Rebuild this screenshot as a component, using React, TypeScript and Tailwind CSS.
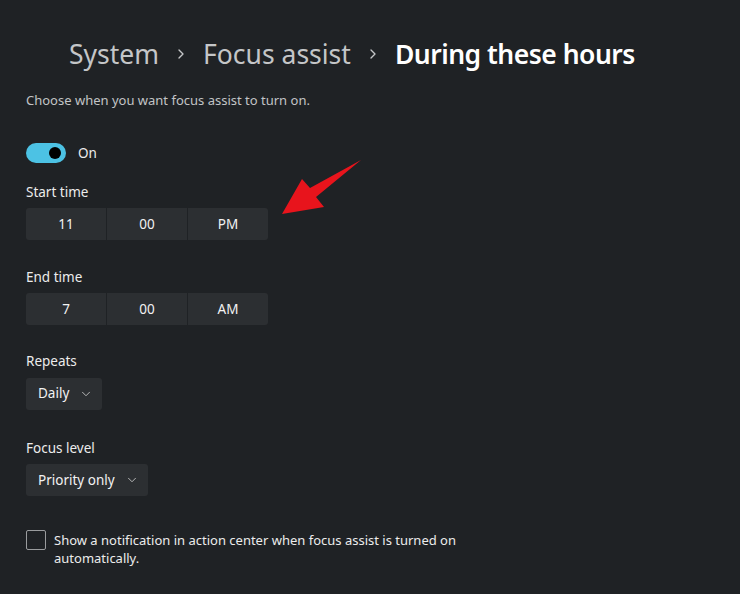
import { ChevronDown, ChevronRight } from "lucide-react";

function TimePicker({ parts }: { parts: string[] }) {
    return (
        <div className="flex w-[242px] h-8 gap-[1px] rounded-[3px] overflow-hidden">
            {parts.map((p, i) => (
                <div
                    key={i}
                    className="flex-1 flex items-center justify-center bg-[#2c2f32] text-[13.5px] text-[#f2f2f2]"
                >
                    {p}
                </div>
            ))}
        </div>
    );
}

function Dropdown({ value }: { value: string }) {
    return (
        <div className="inline-flex items-center gap-[10px] h-8 pl-3 pr-[9px] bg-[#2c2f32] rounded-[3px] text-[13.5px] text-[#f2f2f2]">
            {value}
            <ChevronDown size={14} strokeWidth={1.5} className="text-[#c8c8c8]" />
        </div>
    );
}

export default function App() {
    return (
        <div
            className="relative w-[740px] h-[594px] overflow-hidden bg-[#1f2225] text-white"
            style={{ fontFamily: '"Segoe UI", "Noto Sans", "Open Sans", sans-serif' }}
        >
            {/* breadcrumb */}
            <div className="flex items-center pl-[69px] pt-[32px] h-[76px] text-[26.5px] leading-none">
                <span className="text-[#c4c6c8]">System</span>
                <ChevronRight size={16} strokeWidth={2} className="mx-[14px] text-[#c4c6c8]" />
                <span className="text-[#c4c6c8]">Focus assist</span>
                <ChevronRight size={16} strokeWidth={2} className="mx-[14px] text-[#c4c6c8]" />
                <span className="font-semibold text-white tracking-[-0.5px]">During these hours</span>
            </div>

            <div className="pl-[26px]">
                <p className="mt-[15px] text-[13px] text-[#c2c4c6]">Choose when you want focus assist to turn on.</p>

                {/* toggle */}
                <div className="flex items-center gap-3 mt-[32px]">
                    <div className="relative w-10 h-5 rounded-full bg-[#4cc2e4]">
                        <div className="absolute right-[5px] top-[4px] w-3 h-3 rounded-full bg-black" />
                    </div>
                    <span className="text-[13.5px] text-[#ececec]">On</span>
                </div>

                <div className="mt-[19px] text-[13.5px] text-[#ececec]">Start time</div>
                <div className="mt-[6px]">
                    <TimePicker parts={["11", "00", "PM"]} />
                </div>

                <div className="mt-[27px] text-[13.5px] text-[#ececec]">End time</div>
                <div className="mt-[6px]">
                    <TimePicker parts={["7", "00", "AM"]} />
                </div>

                <div className="mt-[26px] text-[13.5px] text-[#ececec]">Repeats</div>
                <div className="mt-[6px]">
                    <Dropdown value="Daily" />
                </div>

                <div className="mt-[28px] text-[13.5px] text-[#ececec]">Focus level</div>
                <div className="mt-[6px]">
                    <Dropdown value="Priority only" />
                </div>

                <div className="flex gap-2 mt-[34px]">
                    <div className="w-5 h-5 shrink-0 border border-[#9a9c9e] rounded-[2px]" />
                    <p className="text-[13px] leading-[18px] text-[#ececec] w-[420px] mt-[1px]">
                        Show a notification in action center when focus assist is turned on automatically.
                    </p>
                </div>
            </div>

            {/* red arrow annotation */}
            <svg className="absolute left-0 top-0" width="740" height="594">
                <polygon
                    points="282,214 302,179 310,188 361,160 316,197 324,207"
                    fill="#e8141c"
                />
            </svg>
        </div>
    );
}
